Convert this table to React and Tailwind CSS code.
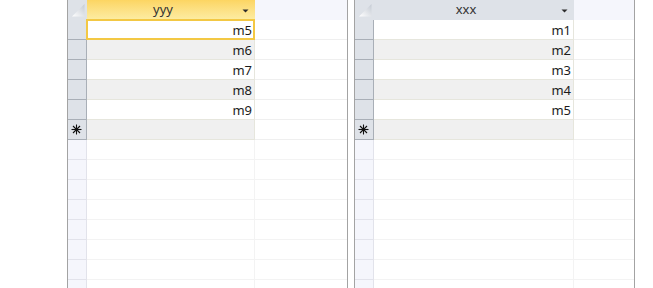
import React from "react";

const FONT = { fontFamily: '"Noto Sans", "Open Sans", Arial, sans-serif' };

function Corner() {
  return (
    <svg width="18" height="20" viewBox="0 0 18 20" className="block">
      <defs>
        <linearGradient id="cg" x1="0" y1="1" x2="1" y2="0">
          <stop offset="0" stopColor="#ffffff" />
          <stop offset="1" stopColor="#c4cad3" />
        </linearGradient>
      </defs>
      <polygon points="4,16.5 16.5,16.5 16.5,4" fill="url(#cg)" />
    </svg>
  );
}

function Arrow() {
  return (
    <svg width="7" height="5" viewBox="0 0 7 5" className="block">
      <polygon points="0.5,1.5 6.5,1.5 3.5,4.5" fill="#2b2b2b" />
    </svg>
  );
}

function Star() {
  return (
    <svg width="11" height="11" viewBox="0 0 11 11" className="block">
      <g stroke="#111" strokeWidth="1.1">
        <line x1="5.5" y1="0.5" x2="5.5" y2="10.5" />
        <line x1="0.5" y1="5.5" x2="10.5" y2="5.5" />
        <line x1="2" y1="2" x2="9" y2="9" />
        <line x1="9" y1="2" x2="2" y2="9" />
      </g>
    </svg>
  );
}

function Panel({ header, selected, colW, values }) {
  const emptyRows = 8;
  return (
    <div className="flex h-full w-[281px] shrink-0 flex-col overflow-hidden border-x border-[#a3a3a3] bg-white">
      {/* header */}
      <div className="flex h-[20px] shrink-0">
        <div className="w-[19px] shrink-0 bg-[#dee2e8]">
          <Corner />
        </div>
        <div
          className={
            "flex shrink-0 items-center " +
            (selected
              ? "bg-gradient-to-b from-[#fcd562] to-[#fdeda3]"
              : "bg-[#dee2e8]")
          }
          style={{ width: colW }}
        >
          <div className="flex-1 pb-[2px] text-center text-[13px] leading-none text-[#333]">{header}</div>
          <div className="w-[16px] shrink-0 pl-[3px]">
            <Arrow />
          </div>
        </div>
        <div className="flex-1 bg-[#f5f6fc]" />
      </div>
      {/* data rows */}
      {values.map((v, i) => {
        const odd = i % 2 === 1;
        return (
          <div key={v} className="flex h-[20px] shrink-0">
            <div className="w-[19px] shrink-0 border-r border-b border-[#a9afb7] bg-[#dee2e8]" />
            <div
              className={
                "relative flex shrink-0 items-center justify-end border-r border-b border-[#e6e6dd] pr-[2px] text-[13px] leading-none text-[#1c1c1c] " +
                (odd ? "bg-[#f0f0f0]" : "bg-white")
              }
              style={{ width: colW }}
            >
              <span className="pt-[1px]">{v}</span>
              {selected && i === 0 && (
                <div className="pointer-events-none absolute -inset-px z-10 border-2 border-[#f3c844]" />
              )}
            </div>
            <div className="flex-1 border-b border-[#efefef] bg-white" />
          </div>
        );
      })}
      {/* new row */}
      <div className="flex h-[20px] shrink-0">
        <div className="flex w-[19px] shrink-0 items-center justify-center border-r border-b border-[#a9afb7] bg-[#dee2e8] pr-[2px]">
          <Star />
        </div>
        <div className="shrink-0 border-r border-b border-[#e6e6dd] bg-[#f0f0f0]" style={{ width: colW }} />
        <div className="flex-1 border-b border-[#efefef] bg-white" />
      </div>
      {/* empty rows */}
      {Array.from({ length: emptyRows }).map((_, i) => (
        <div key={i} className="flex h-[20px] shrink-0">
          <div className="w-[19px] shrink-0 border-r border-b border-[#e2e3eb] bg-[#f5f6fc]" />
          <div className="shrink-0 border-r border-b border-[#f3f3f3] bg-white" style={{ width: colW }} />
          <div className="flex-1 border-b border-[#f3f3f3] bg-white" />
        </div>
      ))}
    </div>
  );
}

export default function App() {
  return (
    <div className="flex h-[288px] w-[653px] overflow-hidden bg-white" style={FONT}>
      <div className="w-[67px] shrink-0" />
      <Panel header="yyy" selected colW={168} values={["m5", "m6", "m7", "m8", "m9"]} />
      <div className="w-[6px] shrink-0" />
      <Panel header="xxx" selected={false} colW={200} values={["m1", "m2", "m3", "m4", "m5"]} />
      <div className="flex-1" />
    </div>
  );
}
